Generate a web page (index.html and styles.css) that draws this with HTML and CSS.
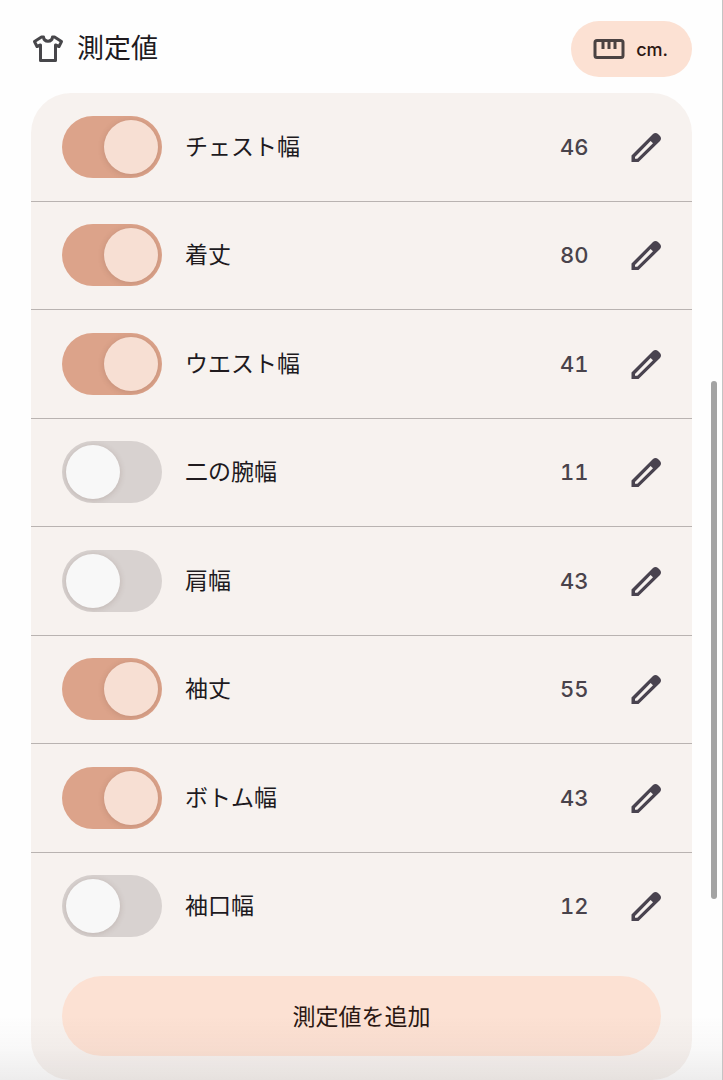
FILE: index.html
```html
<!DOCTYPE html>
<html lang="ja">
<head>
  <meta charset="UTF-8">
  <meta name="viewport" content="width=device-width, initial-scale=1.0">
  <title>測定値</title>
  <link rel="stylesheet" href="styles.css">
</head>
<body>

<svg class="defs" aria-hidden="true">
  <symbol id="pencil" viewBox="0 0 32 32">
    <path fill-rule="evenodd" d="M1.500 24.500 L23 3 Q25.500 0.800 28 3 L30 5 Q32 7.500 30 10 L8.500 31 H1.500 Z M5 26 V27.800 H7.300 L23 12.300 L20.600 10 Z"/>
  </symbol>
</svg>

<main class="page">
  <header class="header">
    <svg class="shirt-icon" viewBox="0 0 32 30" aria-hidden="true">
      <path d="M11.500 3 C12 8.500 20 8.500 20.500 3 H22.500 L29.500 7.500 L27 12.500 L23.500 11 V26.500 H8.500 V11 L5 12.500 L2.500 7.500 L9.500 3 Z"/>
    </svg>
    <h1 class="title">測定値</h1>
    <button class="unit-btn" type="button">
      <svg class="ruler-icon" viewBox="0 0 32 20" aria-hidden="true">
        <rect x="2" y="1.500" width="28" height="17" rx="2"/>
        <path d="M10 2 V10 M16 2 V10 M22 2 V10"/>
      </svg>
      cm.
    </button>
  </header>

  <section class="card">
    <ul class="list">
      <li class="row">
        <input class="switch" type="checkbox" id="chest" checked>
        <label class="name" for="chest">チェスト幅</label>
        <span class="value">46</span>
        <button class="edit-btn" type="button" aria-label="編集"><svg class="edit-icon"><use href="#pencil"/></svg></button>
      </li>
      <li class="row">
        <input class="switch" type="checkbox" id="length" checked>
        <label class="name" for="length">着丈</label>
        <span class="value">80</span>
        <button class="edit-btn" type="button" aria-label="編集"><svg class="edit-icon"><use href="#pencil"/></svg></button>
      </li>
      <li class="row">
        <input class="switch" type="checkbox" id="waist" checked>
        <label class="name" for="waist">ウエスト幅</label>
        <span class="value">41</span>
        <button class="edit-btn" type="button" aria-label="編集"><svg class="edit-icon"><use href="#pencil"/></svg></button>
      </li>
      <li class="row">
        <input class="switch" type="checkbox" id="arm">
        <label class="name" for="arm">二の腕幅</label>
        <span class="value">11</span>
        <button class="edit-btn" type="button" aria-label="編集"><svg class="edit-icon"><use href="#pencil"/></svg></button>
      </li>
      <li class="row">
        <input class="switch" type="checkbox" id="shoulder">
        <label class="name" for="shoulder">肩幅</label>
        <span class="value">43</span>
        <button class="edit-btn" type="button" aria-label="編集"><svg class="edit-icon"><use href="#pencil"/></svg></button>
      </li>
      <li class="row">
        <input class="switch" type="checkbox" id="sleeve" checked>
        <label class="name" for="sleeve">袖丈</label>
        <span class="value">55</span>
        <button class="edit-btn" type="button" aria-label="編集"><svg class="edit-icon"><use href="#pencil"/></svg></button>
      </li>
      <li class="row">
        <input class="switch" type="checkbox" id="bottom" checked>
        <label class="name" for="bottom">ボトム幅</label>
        <span class="value">43</span>
        <button class="edit-btn" type="button" aria-label="編集"><svg class="edit-icon"><use href="#pencil"/></svg></button>
      </li>
      <li class="row">
        <input class="switch" type="checkbox" id="cuff">
        <label class="name" for="cuff">袖口幅</label>
        <span class="value">12</span>
        <button class="edit-btn" type="button" aria-label="編集"><svg class="edit-icon"><use href="#pencil"/></svg></button>
      </li>
    </ul>
    <button class="add-btn" type="button">測定値を追加</button>
  </section>
</main>

<div class="bottom-fade"></div>
<div class="scroll-track"><div class="scroll-thumb"></div></div>

</body>
</html>
```
FILE: styles.css
```css
* {
  box-sizing: border-box;
}

body {
  margin: 0;
  background-color: #fefefe;
  color: #201a1e;
  font-family: Inter, "Noto Sans CJK JP", sans-serif;
}

button {
  border: none;
  font-family: inherit;
  cursor: pointer;
}

.defs {
  display: none;
}

.page {
  padding: 21px 31px 0;
}

.header {
  display: flex;
  align-items: center;
  margin-bottom: 16px;
}

.shirt-icon {
  width: 32px;
  height: 30px;
  margin-left: 1px;
  fill: none;
  stroke: #47464a;
  stroke-width: 3;
  stroke-linejoin: round;
}

.title {
  flex: 1;
  margin: 0 0 0 13px;
  font-size: 27px;
  font-weight: 400;
  line-height: 40px;
}

.unit-btn {
  display: flex;
  align-items: center;
  gap: 11px;
  height: 56px;
  padding: 0 24px 0 22px;
  border-radius: 28px;
  background-color: #fce1d3;
  color: #2b1712;
  font-size: 18px;
  font-weight: 500;
}

.ruler-icon {
  width: 32px;
  height: 20px;
  fill: none;
  stroke: #4a4242;
  stroke-width: 3;
}

.card {
  padding-bottom: 24px;
  border-radius: 40px;
  background-color: #f7f2ef;
}

.list {
  display: grid;
  grid-auto-rows: 1fr;
  min-height: 868px;
  margin: 0;
  padding: 0;
  list-style: none;
}

.row {
  display: flex;
  align-items: center;
  padding: 0 30px 0 31px;
  border-bottom: 1px solid #b9b3b1;
}

.row:last-child {
  border-bottom-color: transparent;
}

.switch {
  appearance: none;
  display: flex;
  align-items: center;
  flex: none;
  width: 100px;
  height: 62px;
  margin: 0;
  padding: 0 4px;
  border-radius: 31px;
  background-color: #d8d2d0;
  overflow: hidden;
  cursor: pointer;
}

.switch::before {
  content: "";
  width: 54px;
  height: 54px;
  border-radius: 50%;
  background-color: #f8f8f8;
  box-shadow: 0 1px 6px rgba(90, 60, 50, 0.2);
}

.switch:checked {
  justify-content: flex-end;
  background-color: #dca38a;
}

.switch:checked::before {
  background-color: #f7dfd3;
}

.name {
  flex: 1;
  padding-left: 23px;
  font-size: 23px;
  line-height: 34px;
}

.value {
  width: 28px;
  color: #49434b;
  font-size: 22px;
  font-weight: 500;
  font-variant-numeric: tabular-nums;
  line-height: 34px;
  text-align: right;
}

.edit-btn {
  display: flex;
  margin-left: 42px;
  padding: 0;
  background: none;
}

.edit-icon {
  width: 32px;
  height: 32px;
  fill: #49434f;
}

.add-btn {
  display: block;
  width: calc(100% - 62px);
  height: 80px;
  margin: 15px auto 0;
  padding: 0 0 2px;
  border-radius: 40px;
  background-color: #fce1d3;
  color: #2b1712;
  font-size: 23px;
  font-weight: 400;
}

.bottom-fade {
  position: fixed;
  right: 0;
  bottom: 0;
  left: 0;
  height: 64px;
  background: linear-gradient(rgba(90, 80, 80, 0), rgba(90, 80, 80, 0.03) 50%, rgba(90, 80, 80, 0.1));
  pointer-events: none;
}

/* thin scroll indicator over the right edge */
.scroll-track {
  position: fixed;
  top: 0;
  right: 0;
  bottom: 0;
  width: 12px;
  border-right: 1px solid #c4c4c4;
  pointer-events: none;
}

.scroll-thumb {
  width: 6px;
  height: 48%;
  margin-top: 381px;
  border-radius: 3px;
  background-color: #a3a3a3;
}
```
